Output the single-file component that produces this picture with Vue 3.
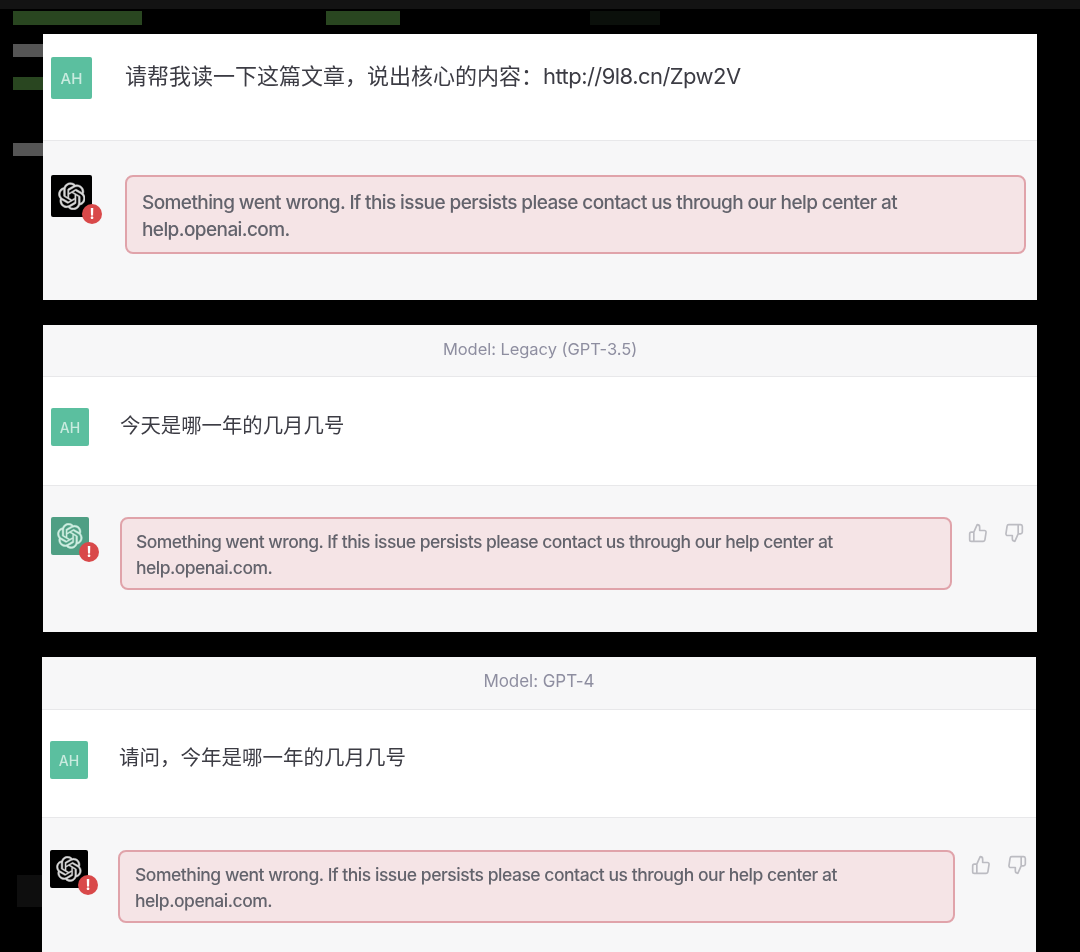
<template>
  <div class="page">
    <div class="backdrop">
      <span
        v-for="block in backdrop"
        :key="block"
        :class="['backdrop__block', block]"
      ></span>
    </div>

    <section
      v-for="chat in chats"
      :key="chat.id"
      :class="['chat', 'chat--' + chat.id]"
    >
      <div v-if="chat.model" class="chat__model">Model: {{ chat.model }}</div>

      <div class="row row--user">
        <div class="avatar avatar--user">AH</div>
        <p class="row__text">{{ chat.question }}<span v-if="chat.link" class="row__link">{{ chat.link }}</span></p>
      </div>

      <div class="row row--bot">
        <div :class="['avatar', 'avatar--' + chat.logo]">
          <svg class="avatar__logo" viewBox="0 0 41 41" fill="currentColor" stroke="currentColor" stroke-width="0.7">
            <path :d="logoPath" />
          </svg>
          <span class="avatar__badge">!</span>
        </div>
        <div class="error">
          Something went wrong. If this issue persists please contact us through our help center at help.openai.com.
        </div>
        <div v-if="chat.model" class="votes">
          <svg viewBox="0 0 24 24" fill="none" stroke="currentColor" stroke-width="2" stroke-linecap="round" stroke-linejoin="round">
            <path d="M14 9V5a3 3 0 0 0-3-3l-4 9v11h11.28a2 2 0 0 0 2-1.7l1.38-9a2 2 0 0 0-2-2.3zM7 22H4a2 2 0 0 1-2-2v-7a2 2 0 0 1 2-2h3" />
          </svg>
          <svg viewBox="0 0 24 24" fill="none" stroke="currentColor" stroke-width="2" stroke-linecap="round" stroke-linejoin="round">
            <path d="M10 15v4a3 3 0 0 0 3 3l4-9V2H5.72a2 2 0 0 0-2 1.7l-1.38 9a2 2 0 0 0 2 2.3zm7-13h2.67A2.31 2.31 0 0 1 22 4v7a2.31 2.31 0 0 1-2.33 2H17" />
          </svg>
        </div>
      </div>
    </section>
  </div>
</template>

<script setup>
const backdrop = ['b1', 'b2', 'b3', 'b4', 'b5', 'b6', 'b7', 'b8']

const chats = [
  {
    id: 'first',
    model: '',
    logo: 'black',
    question: '请帮我读一下这篇文章，说出核心的内容：',
    link: 'http://9l8.cn/Zpw2V'
  },
  {
    id: 'legacy',
    model: 'Legacy (GPT-3.5)',
    logo: 'green',
    question: '今天是哪一年的几月几号'
  },
  {
    id: 'gpt4',
    model: 'GPT-4',
    logo: 'black',
    question: '请问，今年是哪一年的几月几号'
  }
]

const logoPath = 'M37.5324 16.8707C37.9808 15.5241 38.1363 14.0974 37.9886 12.6859C37.8409 11.2744 37.3934 9.91076 36.676 8.68622C35.6126 6.83404 33.9882 5.3676 32.0373 4.4985C30.0864 3.62941 27.9098 3.40259 25.8215 3.85078C24.8796 2.7893 23.7219 1.94125 22.4257 1.36341C21.1295 0.785575 19.7249 0.491269 18.3058 0.500197C16.1708 0.495044 14.0893 1.16803 12.3614 2.42214C10.6335 3.67624 9.34853 5.44666 8.6917 7.47815C7.30085 7.76286 5.98686 8.3414 4.8377 9.17505C3.68854 10.0087 2.73073 11.0782 2.02839 12.312C0.956464 14.1591 0.498905 16.2988 0.721698 18.4228C0.944492 20.5467 1.83612 22.5449 3.268 24.1293C2.81966 25.4759 2.66413 26.9026 2.81182 28.3141C2.95951 29.7256 3.40701 31.0892 4.12437 32.3138C5.18791 34.1659 6.8123 35.6322 8.76321 36.5013C10.7141 37.3704 12.8907 37.5973 14.9789 37.1492C15.9208 38.2107 17.0786 39.0587 18.3747 39.6366C19.6709 40.2144 21.0755 40.5087 22.4946 40.4998C24.6307 40.5054 26.7133 39.8321 28.4418 38.5772C30.1704 37.3223 31.4556 35.5506 32.1119 33.5179C33.5027 33.2332 34.8167 32.6547 35.9659 31.821C37.115 30.9874 38.0728 29.9178 38.7752 28.684C39.8458 26.8371 40.3023 24.6979 40.0789 22.5748C39.8556 20.4517 38.9639 18.4544 37.5324 16.8707ZM22.4978 37.8849C20.7443 37.8874 19.0459 37.2733 17.6994 36.1501C17.7601 36.117 17.8666 36.0586 17.936 36.0161L25.9004 31.4156C26.1003 31.3019 26.2663 31.137 26.3813 30.9378C26.4964 30.7386 26.5563 30.5124 26.5549 30.2825V19.0542L29.9213 20.998C29.9389 21.0068 29.9541 21.0198 29.9656 21.0359C29.977 21.052 29.9842 21.0707 29.9867 21.0902V30.3889C29.9842 32.375 29.1946 34.2791 27.7909 35.6841C26.3872 37.0892 24.4838 37.8806 22.4978 37.8849ZM6.39227 31.0064C5.51397 29.4888 5.19742 27.7107 5.49804 25.9832C5.55718 26.0187 5.66048 26.0818 5.73461 26.1244L13.699 30.7248C13.8975 30.8408 14.1233 30.902 14.3532 30.902C14.583 30.902 14.8088 30.8408 15.0073 30.7248L24.731 25.1103V28.9979C24.7321 29.0177 24.7283 29.0376 24.7199 29.0556C24.7115 29.0736 24.6988 29.0893 24.6829 29.1012L16.6317 33.7497C14.9096 34.7416 12.8643 35.0097 10.9447 34.4954C9.02506 33.9811 7.38785 32.7263 6.39227 31.0064ZM4.29707 13.6194C5.17156 12.0998 6.55279 10.9364 8.19885 10.3327C8.19885 10.4013 8.19491 10.5228 8.19491 10.6071V19.808C8.19351 20.0378 8.25334 20.2638 8.36823 20.4629C8.48312 20.6619 8.64893 20.8267 8.84863 20.9404L18.5723 26.5542L15.206 28.4979C15.1894 28.5089 15.1703 28.5155 15.1505 28.5173C15.1307 28.5191 15.1107 28.516 15.0924 28.5082L7.04046 23.8557C5.32135 22.8601 4.06716 21.2235 3.55289 19.3046C3.03862 17.3858 3.30624 15.3413 4.29707 13.6194ZM31.955 20.0556L22.2312 14.4411L25.5976 12.4981C25.6142 12.4872 25.6333 12.4805 25.6531 12.4787C25.6729 12.4769 25.6928 12.4801 25.7111 12.4879L33.7631 17.1364C34.9967 17.849 36.0017 18.8982 36.6606 20.1613C37.3194 21.4244 37.6047 22.849 37.4832 24.2684C37.3617 25.6878 36.8382 27.0432 35.9743 28.1759C35.1103 29.3086 33.9415 30.1717 32.6047 30.6641C32.6047 30.5947 32.6047 30.4733 32.6047 30.3889V21.188C32.6066 20.9586 32.5474 20.7328 32.4332 20.5338C32.319 20.3348 32.154 20.1698 31.955 20.0556ZM35.3055 15.0128C35.2464 14.9765 35.1431 14.9142 35.069 14.8717L27.1045 10.2712C26.906 10.1554 26.6803 10.0943 26.4504 10.0943C26.2206 10.0943 25.9948 10.1554 25.7963 10.2712L16.0726 15.8858V11.9982C16.0715 11.9783 16.0753 11.9585 16.0837 11.9405C16.0921 11.9225 16.1048 11.9068 16.1207 11.8949L24.1719 7.25025C25.4053 6.53903 26.8158 6.19376 28.2383 6.25482C29.6608 6.31589 31.0364 6.78077 32.2044 7.59508C33.3723 8.40939 34.2842 9.53945 34.8334 10.8531C35.3826 12.1667 35.5464 13.6095 35.3055 15.0128ZM14.2424 21.9419L10.8752 19.9981C10.8576 19.9893 10.8423 19.9763 10.8309 19.9602C10.8195 19.9441 10.8122 19.9254 10.8098 19.9058V10.6071C10.8107 9.18295 11.2173 7.78848 11.9819 6.58696C12.7466 5.38544 13.8377 4.42659 15.1275 3.82264C16.4173 3.21869 17.8524 2.99464 19.2649 3.1767C20.6775 3.35876 22.0089 3.93941 23.1034 4.85067C23.0427 4.88379 22.937 4.94215 22.8668 4.98473L14.9024 9.58517C14.7025 9.69878 14.5366 9.86356 14.4215 10.0626C14.3065 10.2616 14.2466 10.4877 14.2479 10.7175L14.2424 21.9419ZM16.071 17.9991L20.4018 15.4978L24.7325 17.9975V22.9985L20.4018 25.4983L16.071 22.9985V17.9991Z'
</script>

<style>
html,
body {
  margin: 0;
  background: #000;
}
</style>

<style scoped>
.page {
  position: relative;
  width: 1080px;
  height: 952px;
  overflow: hidden;
  box-sizing: border-box;
  padding: 34px 0 0 43px;
  background: #000;
  display: flex;
  flex-direction: column;
  gap: 25px;
  font-family: Inter, "Noto Sans CJK SC", sans-serif;
  color: #3c3c44;
  filter: blur(0.6px);
}

/* blurred terminal text behind the pasted screenshots */
.backdrop {
  position: absolute;
  inset: 0;
}
.backdrop__block {
  position: absolute;
  display: block;
}
.b1 { left: 0; top: 0; width: 1080px; height: 9px; background: #131313; }
.b2 { left: 13px; top: 11px; width: 129px; height: 14px; background: #294620; }
.b3 { left: 326px; top: 11px; width: 74px; height: 14px; background: #294620; }
.b4 { left: 590px; top: 11px; width: 70px; height: 14px; background: #0b100b; }
.b5 { left: 13px; top: 44px; width: 30px; height: 13px; background: #555; }
.b6 { left: 13px; top: 77px; width: 30px; height: 13px; background: #294620; }
.b7 { left: 13px; top: 143px; width: 30px; height: 13px; background: #555; }
.b8 { left: 17px; top: 875px; width: 25px; height: 32px; background: #0e0e0e; }

.chat {
  position: relative;
  width: 994px;
  background: #f7f7f8;
  flex: none;
}
.chat--gpt4 {
  margin-left: -1px;
}

.chat__model {
  height: 52px;
  box-sizing: border-box;
  padding-bottom: 3px;
  border-bottom: 1px solid #e8e8ea;
  display: flex;
  align-items: center;
  justify-content: center;
  font-size: 16.5px;
  letter-spacing: -0.05px;
  color: #8e8ea0;
}
.chat--gpt4 .chat__model {
  height: 53px;
  padding-bottom: 4px;
  font-size: 17px;
}

.row {
  display: flex;
  align-items: flex-start;
  box-sizing: border-box;
}
.row--user {
  background: #fff;
  border-bottom: 1px solid #e8e8ea;
}
.row__text {
  margin: 0;
}
.row__link {
  letter-spacing: -0.55px;
}

.avatar {
  position: relative;
  flex: none;
  width: 38px;
  height: 38px;
  border-radius: 2px;
  display: flex;
  align-items: center;
  justify-content: center;
}
.avatar--user {
  background: #5bbf9f;
  color: #c9ebdf;
  font-size: 14px;
  font-weight: 500;
}
.avatar--black {
  background: #000;
  color: #d8d8d8;
}
.avatar--green {
  background: #4f9f84;
  color: #cfeee2;
}
.avatar__logo {
  width: 68%;
  height: 68%;
}
.avatar__badge {
  position: absolute;
  right: -10px;
  bottom: -7px;
  width: 20px;
  height: 20px;
  border-radius: 50%;
  background: #d9494a;
  color: #fff;
  font-size: 15px;
  font-weight: 700;
  line-height: 20px;
  text-align: center;
}

.error {
  box-sizing: border-box;
  background: #f5e4e6;
  border: 2px solid #e0a3aa;
  border-radius: 8px;
  color: #63636c;
  font-weight: 500;
}

.votes {
  display: flex;
  color: #bcbcc2;
}
.votes svg {
  width: 20px;
  height: 20px;
}

/* first panel is shown slightly bigger than the other two */
.chat--first .row--user {
  height: 107px;
  padding: 23px 0 0 8px;
}
.chat--first .avatar {
  width: 41px;
  height: 42px;
}
.chat--first .avatar--user {
  font-size: 15px;
}
.chat--first .row__text {
  margin-left: 33px;
  font-size: 22px;
  line-height: 38px;
}
.chat--first .row--bot {
  height: 159px;
  padding: 34px 11px 0 8px;
}
.chat--first .error {
  width: 901px;
  height: 79px;
  margin-left: 33px;
  padding: 12px 15px;
  font-size: 19px;
  letter-spacing: -0.59px;
  line-height: 27px;
}

.chat--legacy .row--user,
.chat--gpt4 .row--user {
  height: 109px;
  padding: 31px 0 0 8px;
}
.chat--legacy .row__text,
.chat--gpt4 .row__text {
  margin-left: 31px;
  font-size: 20.4px;
  line-height: 34px;
}
.chat--gpt4 .row__text {
  font-size: 20.5px;
}
.chat--legacy .row__text {
  padding-top: 1px;
}
.chat--gpt4 .row--user {
  height: 108px;
}
.chat--legacy .row--bot {
  height: 146px;
  padding: 31px 0 0 8px;
}
.chat--gpt4 .row--bot {
  height: 134px;
  padding: 32px 0 0 8px;
}
.chat--legacy .error {
  width: 832px;
  height: 73px;
  margin-left: 31px;
  padding: 10px 14px;
  font-size: 17.5px;
  letter-spacing: -0.53px;
  line-height: 26px;
}
.chat--gpt4 .error {
  width: 837px;
  height: 73px;
  margin-left: 30px;
  padding: 10px 15px;
  font-size: 17.5px;
  letter-spacing: -0.47px;
  line-height: 26px;
}
.chat--legacy .votes {
  margin: 6px 0 0 16px;
  gap: 16px;
}
.chat--gpt4 .votes {
  margin: 5px 0 0 16px;
  gap: 16px;
}
</style>
